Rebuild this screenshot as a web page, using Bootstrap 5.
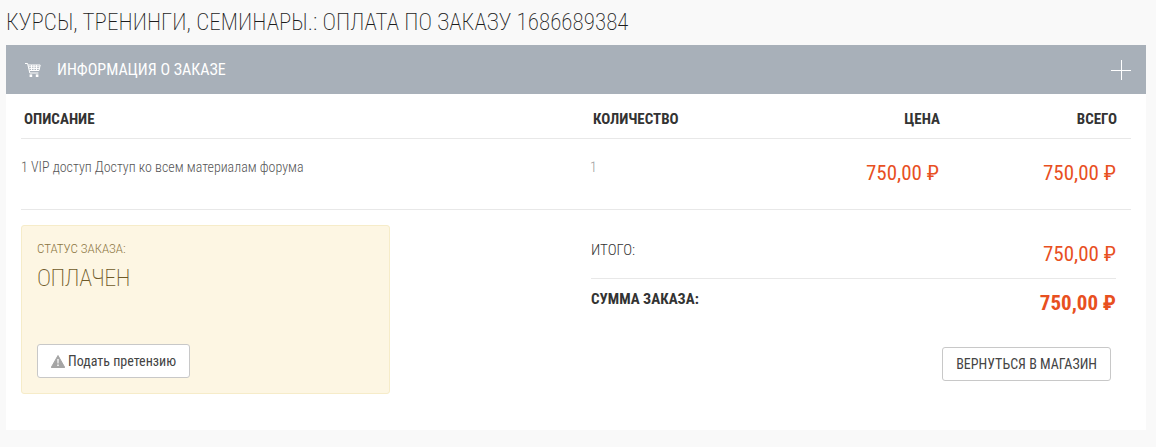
<!DOCTYPE html>
<html lang="ru">
<head>
  <meta charset="UTF-8" />
  <meta name="viewport" content="width=device-width, initial-scale=1.0">
  <title>Оплата по заказу</title>
  <link href="https://cdn.jsdelivr.net/npm/bootstrap@5.3.3/dist/css/bootstrap.min.css" rel="stylesheet">
  <style>
    body { background: #f9f9f9; font-family: Roboto, sans-serif; font-stretch: condensed; color: #333; overflow: hidden; }
    .page-title { font-size: 23px; font-weight: 200; letter-spacing: .05px; line-height: 26px; color: #1c1c1c; margin: 0; padding: 10px 6px 9px; }
    .order-panel { margin: 0 10px 0 6px; background: #fff; height: 385px; }
    .order-head { height: 49px; background: #a8b0b9; color: #fff; padding: 0 15px 0 19px; }
    .order-head-title { font-size: 16px; font-weight: 400; margin-left: 16px; }
    .order-body { padding: 0 15px; }
    .items-row { display: grid; grid-template-columns: 569px 1fr 170px 177px; }
    .items-head { height: 45px; border-bottom: 1px solid #e8e8e8; font-size: 15px; font-weight: 700; align-items: center; padding: 7px 14px 0 3px; }
    .items-line { height: 71px; border-bottom: 1px solid #e8e8e8; padding: 0 15px 0 0; font-size: 14px; font-weight: 300; color: #555; }
    .items-line > div { padding-top: 18px; }
    .items-qty { color: #999; }
    .price { font-size: 21px; font-weight: 400; color: #e8501f; text-align: right; line-height: 30px; padding-top: 19px !important; }
    .status-box { width: 369px; height: 169px; background: #fdf6e3; border: 1px solid #f6ecc9; border-radius: 3px; padding: 15px; color: #8a7440; }
    .status-label { font-size: 13px; font-weight: 300; line-height: 16px; }
    .status-value { font-size: 24px; font-weight: 200; letter-spacing: -.5px; line-height: 30px; margin-top: 6px; color: #6f5a28; }
    .btn-plain { background: #fff; border: 1px solid #c8c8c8; border-radius: 3px; color: #444; font-size: 14px; font-stretch: condensed; font-weight: 400; line-height: 18px; padding: 7px 13px; }
    .totals { width: 525px; margin-left: 201px; padding-top: 15px; }
    .total-row { border-bottom: 1px solid #e8e8e8; height: 54px; font-weight: 300; font-size: 15px; }
    .total-row .price { padding-top: 14px !important; }
    .total-row .total-label { padding-top: 14px; }
    .total-sum { height: 68px; font-weight: 700; }
    .total-sum .total-label { padding-top: 9px; font-size: 15px; }
    .total-sum .price { font-weight: 700; padding-top: 9px !important; }
    .status-col { padding-top: 15px; }
    .back-btn { margin-right: 5px; }
    .claim-btn { gap: 3px; }
  </style>
</head>
<body>

<h1 class="page-title">КУРСЫ, ТРЕНИНГИ, СЕМИНАРЫ.: ОПЛАТА ПО ЗАКАЗУ 1686689384</h1>

<div class="order-panel">
  <div class="order-head d-flex align-items-center">
    <svg width="16" height="16" viewBox="0 0 16 16" fill="none" stroke="#fff" stroke-width="1">
      <path d="M0 1.5h2.6l2.2 9.5h8.6"/>
      <path d="M3.2 3h12l-1.2 5.5H4.6M3.6 4.8h11.2M4.2 6.6h10.4M6.5 3v5.5M9 3v5.5M11.5 3v5.5"/>
      <rect x="4.6" y="12.4" width="2.6" height="2.6" fill="#fff" stroke="none"/>
      <rect x="10.8" y="12.4" width="2.6" height="2.6" fill="#fff" stroke="none"/>
    </svg>
    <div class="order-head-title flex-grow-1">ИНФОРМАЦИЯ О ЗАКАЗЕ</div>
    <svg width="20" height="20" viewBox="0 0 20 20" stroke="#fff" stroke-width="1"><path d="M0 10.5h20M10.5 0v20"/></svg>
  </div>

  <div class="order-body">
    <div class="items-row items-head">
      <div>ОПИСАНИЕ</div>
      <div>КОЛИЧЕСТВО</div>
      <div class="text-end">ЦЕНА</div>
      <div class="text-end">ВСЕГО</div>
    </div>
    <div class="items-row items-line">
      <div>1 VIP доступ Доступ ко всем материалам форума</div>
      <div class="items-qty">1</div>
      <div class="price">750,00 ₽</div>
      <div class="price">750,00 ₽</div>
    </div>

    <div class="d-flex">
      <div class="status-col">
        <div class="status-box d-flex flex-column">
          <div class="status-label">СТАТУС ЗАКАЗА:</div>
          <div class="status-value flex-grow-1">ОПЛАЧЕН</div>
          <div>
            <button type="button" class="btn-plain claim-btn d-inline-flex align-items-center">
              <svg width="14" height="13" viewBox="0 0 14 13"><path d="M7 0.5 13.8 12.5H0.2Z" fill="#a5a5a5" stroke="#a5a5a5" stroke-linejoin="round"/><path d="M6.3 4h1.4l-.2 4.6h-1zM6.3 9.6h1.4V11H6.3z" fill="#fff"/></svg>
              Подать претензию
            </button>
          </div>
        </div>
      </div>
      <div class="totals">
        <div class="total-row d-flex justify-content-between">
          <div class="total-label">ИТОГО:</div>
          <div class="price">750,00 ₽</div>
        </div>
        <div class="total-sum d-flex justify-content-between">
          <div class="total-label">СУММА ЗАКАЗА:</div>
          <div class="price">750,00 ₽</div>
        </div>
        <div class="text-end">
          <button type="button" class="btn-plain back-btn">ВЕРНУТЬСЯ В МАГАЗИН</button>
        </div>
      </div>
    </div>
  </div>
</div>

<script src="https://cdn.jsdelivr.net/npm/bootstrap@5.3.3/dist/js/bootstrap.bundle.min.js"></script>
</body>
</html>
